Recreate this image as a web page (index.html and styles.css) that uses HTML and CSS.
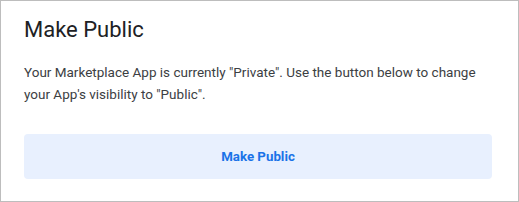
FILE: index.html
```html
<!DOCTYPE html>
<html>
<head>
    <title>Make Public</title>
    <link rel="stylesheet" href="styles.css">
</head>
<body>
    <div class="card">
        <h2 class="card-title">Make Public</h2>
        <p class="card-text">Your Marketplace App is currently "Private". Use the button below to change your App's visibility to "Public".</p>
        <button class="public-button" type="button">Make Public</button>
    </div>
</body>
</html>
```

FILE: styles.css
```css
body {
    font-family: Roboto, "Liberation Sans", sans-serif;
    margin: 0;
    background: white;
    color: #202124;
}
.card {
    box-sizing: border-box;
    width: 519px;
    height: 202px;
    border: 1px solid #bdbdbd;
    padding: 15px 26px 0 23px;
    display: flex;
    flex-direction: column;
}
.card-title {
    font-size: 22px;
    font-weight: 400;
    line-height: 28px;
    margin: 0;
}
.card-text {
    font-size: 13.5px;
    line-height: 22px;
    color: #3c4043;
    margin: 17px 0 0;
}
.public-button {
    margin-top: 29px;
    height: 45px;
    width: 100%;
    background: #e8f0fe;
    color: #1a73e8;
    border: none;
    border-radius: 4px;
    font-family: inherit;
    font-size: 13.3px;
    font-weight: 700;
    cursor: pointer;
}
```
